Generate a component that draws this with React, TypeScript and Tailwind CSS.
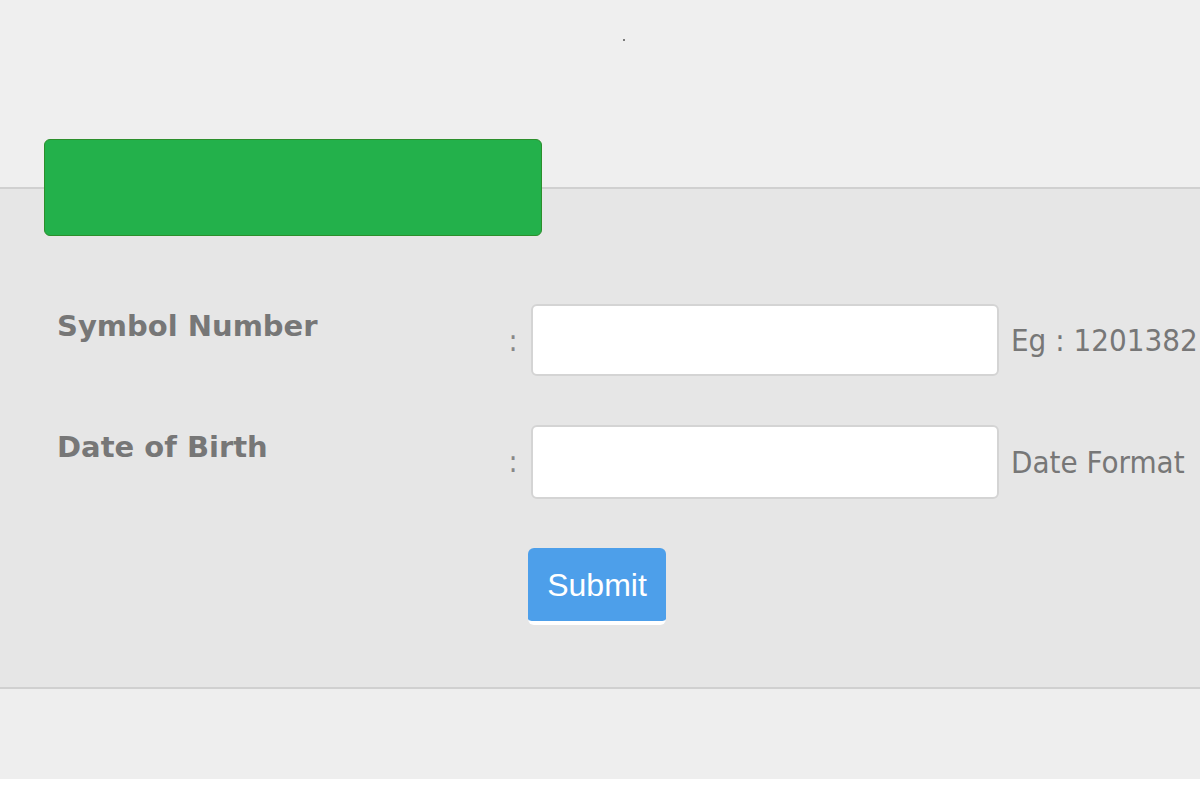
import React from "react";

export default function App() {
  return (
    <div className="w-[1200px] h-[800px] bg-white overflow-hidden">
      <div className="h-[187px] bg-[#efefef] relative">
        <div className="absolute left-[623px] top-[39px] w-[2px] h-[2px] bg-[#555] rounded-full" />
      </div>
      <div className="h-[502px] bg-[#e6e6e6] border-t-[2px] border-b-[2px] border-[#d0d0d0] flex flex-col">
        <div className="relative z-10 ml-[44px] -mt-[50px] w-[498px] h-[97px] bg-[#23b14b] border border-[#2c8f2c] rounded-[6px]" />
        <div className="mt-[68px] flex flex-col gap-[49px]">
          <div className="flex items-start">
            <div className="w-[505px] shrink-0 pl-[57px] pt-[4px] text-[29px] font-bold text-[#777] font-['DejaVu_Sans',sans-serif] leading-[36px]">Symbol Number</div>
            <div className="w-[26px] shrink-0 pr-[10px] pt-[21px] text-[30px] text-[#888] font-['DejaVu_Sans_Condensed','DejaVu_Sans',sans-serif] text-center leading-[32px]">:</div>
            <div className="w-[468px] shrink-0 h-[72px] bg-white border-[2px] border-[#d4d4d4] rounded-[6px]" />
            <div className="ml-[12px] shrink-0 pt-[17px] whitespace-nowrap text-[31px] text-[#777] font-['DejaVu_Sans_Condensed','DejaVu_Sans',sans-serif] leading-[38px]">Eg : 1201382</div>
          </div>
          <div className="flex items-start">
            <div className="w-[505px] shrink-0 pl-[57px] pt-[4px] text-[29px] font-bold text-[#777] font-['DejaVu_Sans',sans-serif] leading-[36px]">Date of Birth</div>
            <div className="w-[26px] shrink-0 pr-[10px] pt-[21px] text-[30px] text-[#888] font-['DejaVu_Sans_Condensed','DejaVu_Sans',sans-serif] text-center leading-[32px]">:</div>
            <div className="w-[468px] shrink-0 h-[74px] bg-white border-[2px] border-[#d4d4d4] rounded-[6px]" />
            <div className="ml-[12px] shrink-0 pt-[18px] whitespace-nowrap text-[31px] text-[#777] font-['DejaVu_Sans_Condensed','DejaVu_Sans',sans-serif] leading-[38px]">Date Format</div>
          </div>
          <div className="pl-[528px]">
            <button className="w-[138px] h-[77px] bg-[#4d9fea] border-b-[4px] border-white rounded-[6px] text-white text-[32px] font-['Liberation_Sans',Arial,sans-serif]">Submit</button>
          </div>
        </div>
      </div>
      <div className="h-[90px] bg-[#eeeeee]" />
    </div>
  );
}
